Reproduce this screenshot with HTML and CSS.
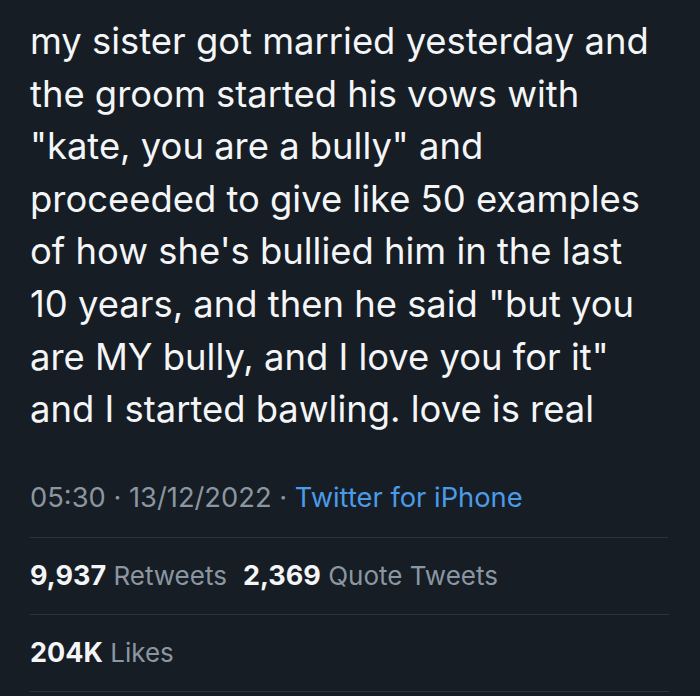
FILE: index.html
```html
<!DOCTYPE html>
<html lang="en">
<head>
<meta charset="utf-8">
<title>Tweet</title>
<link rel="stylesheet" href="styles.css">
</head>
<body>
<main class="tweet">
  <p class="tweet-text">my sister got married yesterday and the groom started his vows with "kate, you are a bully" and proceeded to give like 50 examples of how she's bullied him in the last 10 years, and then he said "but you are MY bully, and I love you for it" and I started bawling. love is real</p>
  <div class="meta">05:30 · 13/12/2022 · <span class="source">Twitter for iPhone</span></div>
  <div class="stats">
    <span class="stat"><b>9,937</b> Retweets</span>
    <span class="stat"><b>2,369</b> Quote Tweets</span>
  </div>
  <div class="stats">
    <span class="stat"><b>204K</b> Likes</span>
  </div>
</main>
</body>
</html>
```
FILE: styles.css
```css
html, body {
  margin: 0;
  padding: 0;
  background: #161d25;
}
.tweet {
  width: 700px;
  height: 696px;
  box-sizing: border-box;
  padding: 15px 31px 0 30px;
  font-family: Inter, "Noto Sans", sans-serif;
  color: #e7e9ea;
}
.tweet-text {
  margin: 0;
  font-size: 36.4px;
  line-height: 52.6px;
  width: 636px;
  color: #f4f5f6;
}
.meta {
  margin-top: 46px;
  font-size: 27.3px;
  line-height: 32px;
  color: #8b96a1;
  padding-bottom: 23px;
  border-bottom: 1px solid #2c343d;
  margin-right: 1px;
}
.source {
  color: #4b9be8;
}
.stats {
  display: flex;
  gap: 16px;
  font-size: 26px;
  line-height: 30px;
  color: #8b96a1;
  padding: 23px 0;
  border-bottom: 1px solid #2c343d;
}
.stat b {
  color: #f4f5f6;
  font-weight: 700;
  font-size: 27px;
}
```
